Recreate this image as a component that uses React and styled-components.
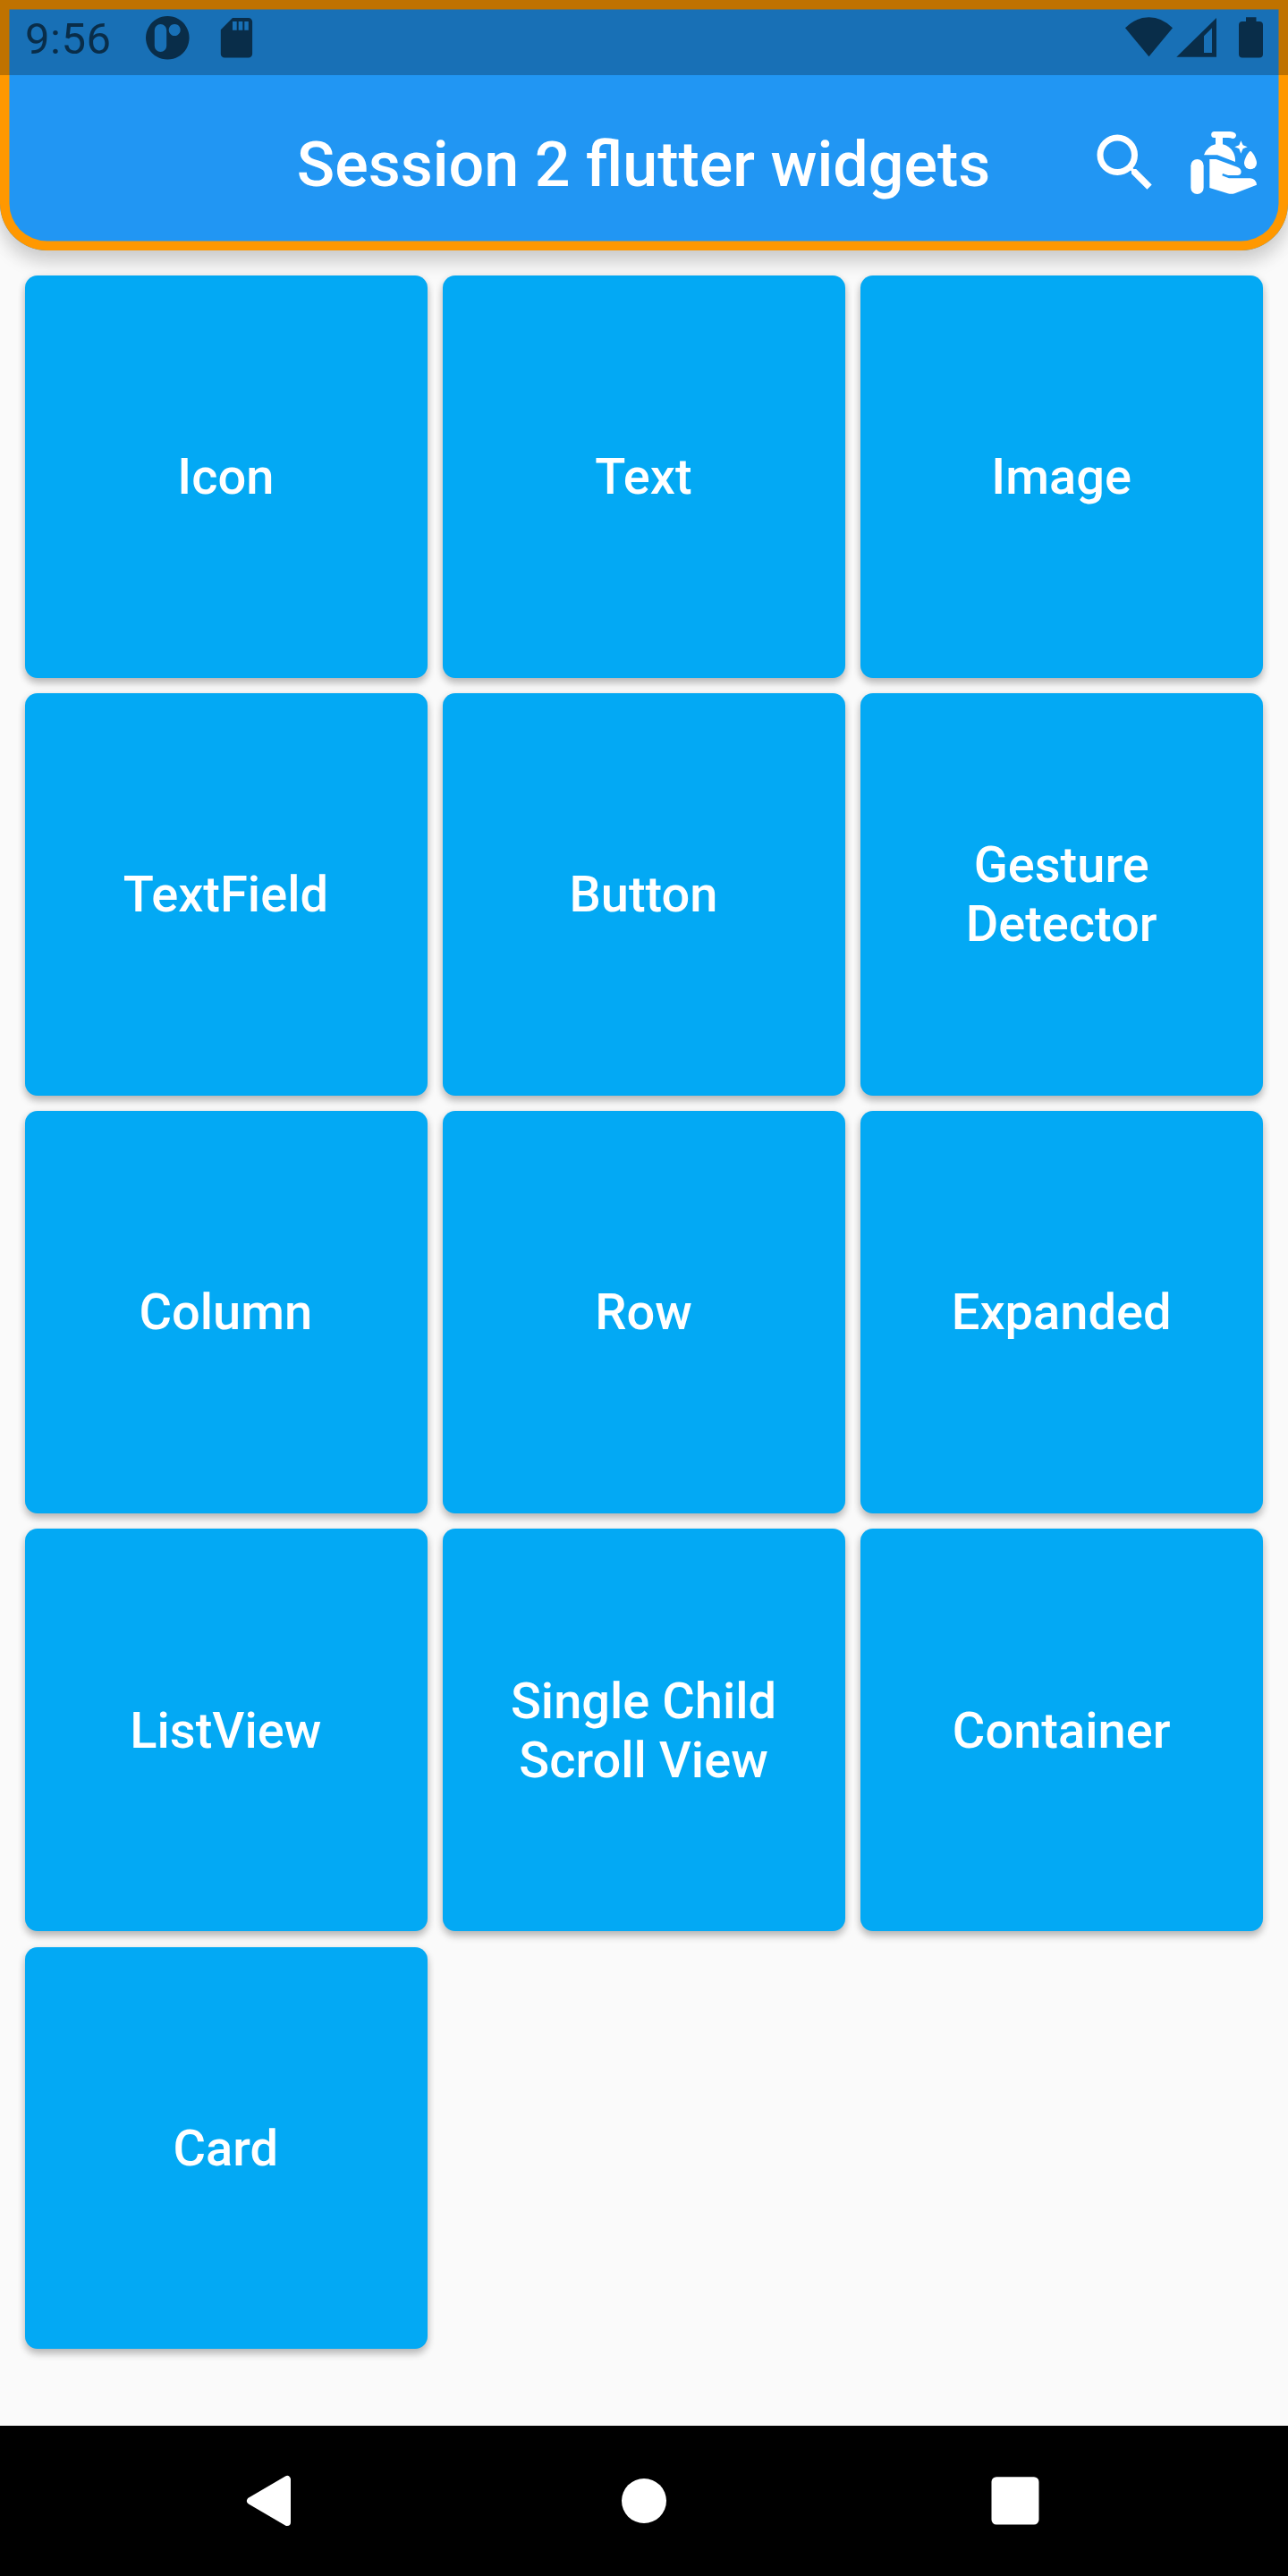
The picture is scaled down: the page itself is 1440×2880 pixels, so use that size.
import React from 'react';
import styled, { createGlobalStyle } from 'styled-components';
import { MdSearch } from 'react-icons/md';

const GlobalStyle = createGlobalStyle`
  body { margin: 0; background: #fafafa; }
`;

const Screen = styled.div`
  position: relative;
  display: flex;
  flex-direction: column;
  width: 1440px;
  height: 2880px;
  overflow: hidden;
  background: #fafafa;
  font-family: Roboto, sans-serif;
`;

const StatusBar = styled.div`
  position: absolute;
  top: 0;
  left: 0;
  z-index: 3;
  box-sizing: border-box;
  width: 100%;
  height: 84px;
  display: flex;
  justify-content: space-between;
  background: rgba(0, 0, 0, 0.25);
`;

const Clock = styled.span`
  width: 134px;
  padding-left: 28px;
  font-size: 49px;
  letter-spacing: 0.5px;
  line-height: 88px;
  color: rgba(0, 0, 0, 0.6);
`;

const StatusGroup = styled.div`
  display: flex;
`;

const StatusIcon = styled.svg`
  display: block;
  width: ${(p) => p.$width}px;
  height: 84px;
  fill: rgba(0, 0, 0, 0.6);
`;

const AppBar = styled.header`
  position: relative;
  z-index: 2;
  box-sizing: border-box;
  height: 280px;
  flex: none;
  display: grid;
  grid-template-columns: 1fr auto 1fr;
  align-items: center;
  padding: 84px 28px 0;
  border-radius: 0 0 52.5px 52.5px;
  background: #2196f3;
  box-shadow:
    inset 0 0 0 10.5px #ff9800,
    0 14px 20px rgba(0, 0, 0, 0.13),
    0 4px 26px rgba(0, 0, 0, 0.1);
`;

const Title = styled.h1`
  grid-column: 2;
  margin: 4px 1px 0 0;
  font-size: 70px;
  font-weight: 500;
  line-height: 82px;
  color: #fff;
  white-space: nowrap;
`;

const Actions = styled.div`
  display: flex;
  justify-content: flex-end;
  gap: 28px;
  color: #fff;
  svg {
    display: block;
    fill: currentColor;
  }
`;

const Grid = styled.main`
  flex: 1;
  display: grid;
  grid-template-columns: repeat(3, 1fr);
  grid-auto-rows: 449.67px;
  gap: 17.5px;
  padding: 28px;
`;

const Tile = styled.button`
  display: flex;
  align-items: center;
  justify-content: center;
  padding: 0.7px 57px 0 56px;
  border: 0;
  border-radius: 14px;
  background: #03a9f4;
  box-shadow: 0 6px 8px rgba(0, 0, 0, 0.2), 0 2px 10px rgba(0, 0, 0, 0.12);
  color: #fff;
  font: 500 56px/66px Roboto, sans-serif;
  white-space: pre-line;
`;

const NavBar = styled.nav`
  flex: none;
  height: 168px;
  display: flex;
  align-items: center;
  justify-content: center;
  gap: 331px;
  background: #000;
  svg { display: block; fill: #fff; }
`;

const CleanHandsIcon = () => (
  <svg width="84" height="84" viewBox="384 60 252 252">
    <rect x="394" y="174" width="43" height="117" rx="21.500" />
    <path d="M473 81H525Q546 83 546 94Q545 105 534 105Q528 102 519 102H501V124Q525 130 536 150Q544 164 543 183L483 160H438Q448 131 477 124V102H473A10.500 10.500 0 0 1 473 81Z" />
    <path d="M457 174H479L550 200Q563 205 563 216Q563 228 550 228H519L501 222L499 229L522 238H594Q613 240 615 260L541 289Q530 292 518 289L457 270Z" />
    <path d="M562 112L569 127L584 133L569 139L562 155L556 139L541 133L556 127Z" />
    <path d="M594 147C600 147 615 172 615 187A21 21 0 0 1 573 187C573 172 588 147 594 147Z" />
  </svg>
);

const tiles = [
  'Icon', 'Text', 'Image',
  'TextField', 'Button', 'Gesture\nDetector',
  'Column', 'Row', 'Expanded',
  'ListView', 'Single Child\nScroll View', 'Container',
  'Card',
];

export default function App() {
  return (
    <Screen>
      <GlobalStyle />
      <StatusBar>
        <StatusGroup>
          <Clock>9:56</Clock>
          <StatusIcon $width={140} viewBox="162 0 140 84">
            <path
              fillRule="evenodd"
              d="M187.300 18a24.300 24.300 0 1 0 .01 0zM179.500 27a6.700 6.700 0 0 1 6.700 6.700v17.600a6.700 6.700 0 0 1-13.400 0V33.700a6.700 6.700 0 0 1 6.700-6.700zM195.200 27a6.500 6.500 0 1 1-.01 0z"
            />
            <path
              fillRule="evenodd"
              d="M260 20h17.800a4.300 4.300 0 0 1 4.300 4.300v36a4.300 4.300 0 0 1-4.300 4.300h-26.700a4.300 4.300 0 0 1-4.300-4.300V33.300zM260 24v9.700h4.700V24zM266.700 24v9.700h4.600V24zM273.300 24v9.700h4.500V24z"
            />
          </StatusIcon>
        </StatusGroup>
        <StatusIcon $width={190} viewBox="1250 0 190 84">
          <path d="M1258 31.300Q1270 19.300 1284.500 19.300T1311 31.300L1284.500 63.300z" />
          <path fillRule="evenodd" d="M1360 20v43.700h-44.700zM1355 31.200l-9 9V59h9z" />
          <path d="M1393 19.300h11.500V24h3.500a4 4 0 0 1 4 4v32.600a4 4 0 0 1-4 4h-19a4 4 0 0 1-4-4V28a4 4 0 0 1 4-4h4z" />
        </StatusIcon>
      </StatusBar>
      <AppBar>
        <Title>Session 2 flutter widgets</Title>
        <Actions>
          <MdSearch size={84} />
          <CleanHandsIcon />
        </Actions>
      </AppBar>
      <Grid>
        {tiles.map((label) => (
          <Tile key={label}>{label}</Tile>
        ))}
      </Grid>
      <NavBar>
        <svg width="84" height="84" viewBox="0 0 84 84">
          <path d="M17 42L58 18V66Z" stroke="#fff" strokeWidth="8" strokeLinejoin="round" />
        </svg>
        <svg width="84" height="84" viewBox="0 0 84 84">
          <circle cx="42" cy="42" r="25" />
        </svg>
        <svg width="84" height="84" viewBox="0 0 84 84">
          <rect x="15.500" y="15.200" width="53" height="53.300" rx="5.500" />
        </svg>
      </NavBar>
    </Screen>
  );
}
